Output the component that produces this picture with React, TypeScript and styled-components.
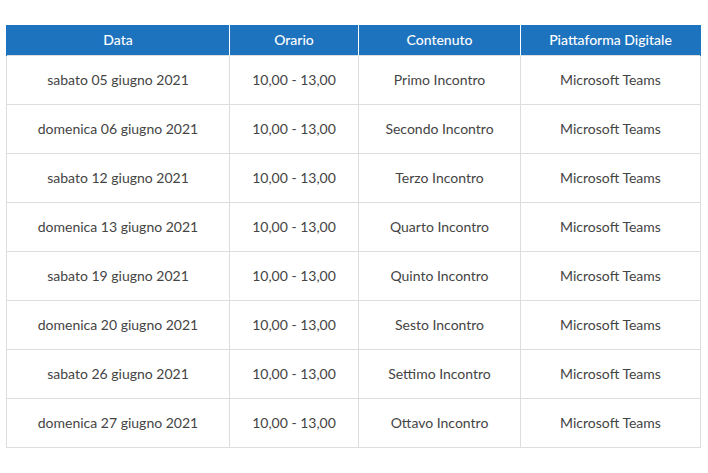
import React from "react";
import styled, { createGlobalStyle } from "styled-components";

const Global = createGlobalStyle`
  html, body { margin: 0; padding: 0; background: #fff; }
  body { font-family: Lato, "Open Sans", sans-serif; }
`;

const Page = styled.div`
  padding: 25px 0 0 6px;
`;

const Table = styled.table`
  border-collapse: collapse;
  table-layout: fixed;
  width: 694px;
  font-family: Lato, sans-serif;
  font-size: 14px;
`;

const HeadCell = styled.th`
  background: #1e73be;
  color: #fff;
  font-weight: 500;
  height: 30px;
  padding: 0;
  text-align: center;
  border-left: 1px solid #fff;
  border-right: 1px solid #fff;
  box-sizing: border-box;
  &:first-child { border-left: 1px solid #1e73be; }
  &:last-child { border-right: 1px solid #1e73be; }
`;

const Cell = styled.td`
  color: #444;
  height: 49px;
  padding: 0;
  text-align: center;
  border: 1px solid #dddddd;
  box-sizing: border-box;
`;

const rows = [
  ["sabato 05 giugno 2021", "Primo Incontro"],
  ["domenica 06 giugno 2021", "Secondo Incontro"],
  ["sabato 12 giugno 2021", "Terzo Incontro"],
  ["domenica 13 giugno 2021", "Quarto Incontro"],
  ["sabato 19 giugno 2021", "Quinto Incontro"],
  ["domenica 20 giugno 2021", "Sesto Incontro"],
  ["sabato 26 giugno 2021", "Settimo Incontro"],
  ["domenica 27 giugno 2021", "Ottavo Incontro"],
];

export default function App() {
  return (
    <Page>
      <Global />
      <Table>
        <colgroup>
          <col style={{ width: 223 }} />
          <col style={{ width: 129 }} />
          <col style={{ width: 162 }} />
          <col style={{ width: 180 }} />
        </colgroup>
        <thead>
          <tr>
            <HeadCell>Data</HeadCell>
            <HeadCell>Orario</HeadCell>
            <HeadCell>Contenuto</HeadCell>
            <HeadCell>Piattaforma Digitale</HeadCell>
          </tr>
        </thead>
        <tbody>
          {rows.map(([d, c]) => (
            <tr key={d}>
              <Cell>{d}</Cell>
              <Cell>10,00 - 13,00</Cell>
              <Cell>{c}</Cell>
              <Cell>Microsoft Teams</Cell>
            </tr>
          ))}
        </tbody>
      </Table>
    </Page>
  );
}
